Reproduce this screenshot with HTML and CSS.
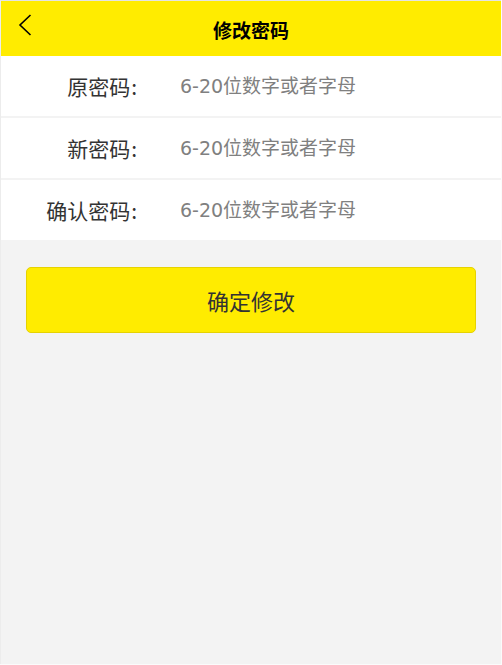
FILE: index.html
```html
<!DOCTYPE html>
<html lang="zh-CN">
<head>
<meta charset="utf-8">
<title>修改密码</title>
<link rel="stylesheet" href="styles.css">
</head>
<body>
<div class="page">
  <header class="topbar">
    <span class="back">
      <svg width="14" height="22" viewBox="0 0 14 22"><path d="M12.5 1 L2 11 L12.5 21" fill="none" stroke="#000" stroke-width="1.6"/></svg>
    </span>
    <h1 class="title">修改密码</h1>
  </header>
  <div class="form">
    <div class="row"><label class="label">原密码<span class="colon">:</span></label><input class="field" type="password" placeholder="6-20位数字或者字母"></div>
    <div class="row"><label class="label">新密码<span class="colon">:</span></label><input class="field" type="password" placeholder="6-20位数字或者字母"></div>
    <div class="row"><label class="label">确认密码<span class="colon">:</span></label><input class="field" type="password" placeholder="6-20位数字或者字母"></div>
  </div>
  <div class="actions">
    <button class="submit">确定修改</button>
  </div>
</div>
</body>
</html>
```
FILE: styles.css
```css
* { box-sizing: border-box; }
html, body { margin: 0; padding: 0; }
body {
  background: #fbfbfb;
  font-family: "Noto Sans CJK SC", "Noto Sans", sans-serif;
}
.page {
  margin: 0 1px 1px 0;
  border-top: 1px solid #e4e4e4;
  border-left: 1px solid #ececec;
  min-height: 664px;
  background: #f3f3f3;
}
.topbar {
  height: 55px;
  background: #ffec00;
  display: flex;
  align-items: center;
  justify-content: center;
  position: relative;
}
.back {
  position: absolute;
  left: 17px;
  top: 13px;
  display: flex;
}
.title {
  margin: 0;
  font-size: 19px;
  font-weight: 700;
  color: #000;
  padding-top: 2px;
}
.form {
  display: flex;
  flex-direction: column;
  gap: 2px;
}
.row {
  height: 60px;
  background: #fff;
  display: flex;
  align-items: center;
}
.label {
  width: 136px;
  text-align: right;
  font-size: 21px;
  color: #333;
  white-space: nowrap;
}
.colon {
  margin-left: 1px;
}
.field {
  margin-left: 43px;
  border: none;
  outline: none;
  background: transparent;
  font-family: "DejaVu Sans", "Noto Sans CJK SC", sans-serif;
  font-size: 19px;
  color: #333;
  flex: 1;
  padding: 0;
}
.field::placeholder {
  color: #808080;
  font-family: "DejaVu Sans", "Noto Sans CJK SC", sans-serif;
}
.actions {
  padding: 27px 25px 0 25px;
}
.submit {
  width: 100%;
  height: 66px;
  background: #ffec00;
  border: 1px solid #e6d200;
  border-radius: 5px;
  font-family: inherit;
  font-size: 22px;
  color: #333;
}
```
